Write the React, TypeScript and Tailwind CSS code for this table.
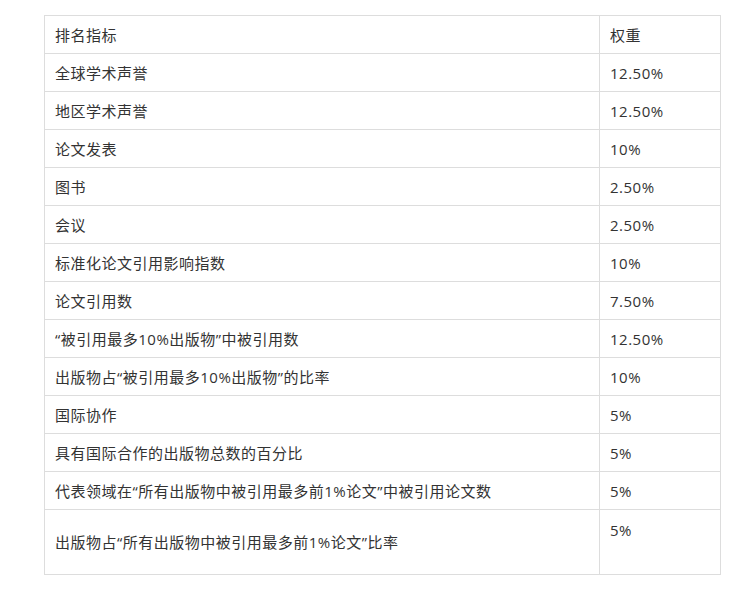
type Row = {
  name: string;
  weight: string;
};

const rows: Row[] = [
  { name: "全球学术声誉", weight: "12.50%" },
  { name: "地区学术声誉", weight: "12.50%" },
  { name: "论文发表", weight: "10%" },
  { name: "图书", weight: "2.50%" },
  { name: "会议", weight: "2.50%" },
  { name: "标准化论文引用影响指数", weight: "10%" },
  { name: "论文引用数", weight: "7.50%" },
  { name: "“被引用最多10%出版物”中被引用数", weight: "12.50%" },
  { name: "出版物占“被引用最多10%出版物”的比率", weight: "10%" },
  { name: "国际协作", weight: "5%" },
  { name: "具有国际合作的出版物总数的百分比", weight: "5%" },
  { name: "代表领域在“所有出版物中被引用最多前1%论文”中被引用论文数", weight: "5%" },
];

const App = () => {
  return (
    <div className="w-[744px] h-[595px] bg-white pt-[15px] pl-[44px] font-['Open_Sans','Noto_Sans_CJK_SC',sans-serif] text-[15px] tracking-[0.5px] text-[#333]">
      <table className="w-[676px] border-collapse table-fixed">
        <colgroup>
          <col className="w-[555px]" />
          <col className="w-[121px]" />
        </colgroup>
        <tbody>
          <tr className="h-[38px]">
            <td className="border border-[#ddd] px-[10px] align-middle leading-6">排名指标</td>
            <td className="border border-[#ddd] px-[10px] align-middle leading-6">权重</td>
          </tr>
          {rows.map((row, index) => (
            <tr key={index} className="h-[38px]">
              <td className="border border-[#ddd] px-[10px] align-middle leading-6">{row.name}</td>
              <td className="border border-[#ddd] px-[10px] align-middle leading-6">{row.weight}</td>
            </tr>
          ))}
          <tr className="h-[65px]">
            <td className="border border-[#ddd] px-[10px] align-middle leading-6">
              出版物占“所有出版物中被引用最多前1%论文”比率
            </td>
            <td className="border border-[#ddd] px-[10px] pt-[8px] align-top leading-6">5%</td>
          </tr>
        </tbody>
      </table>
    </div>
  );
};

export default App;
